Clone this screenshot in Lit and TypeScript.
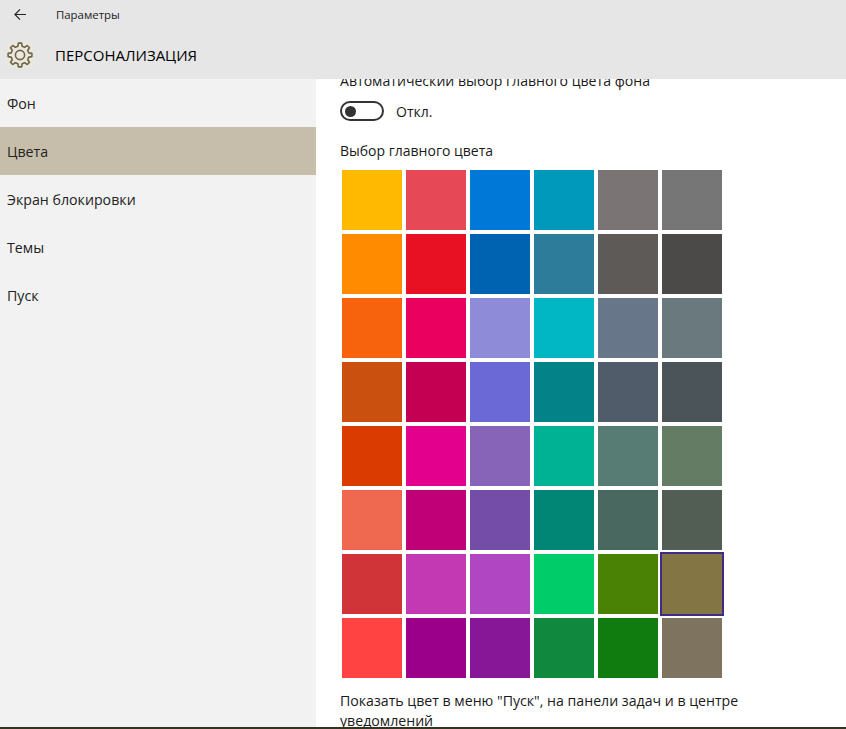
import { LitElement, html, css, svg } from "lit";
import { customElement } from "lit/decorators.js";

const COLORS = [
  ["#ffb900", "#e74856", "#0078d7", "#0099bc", "#7a7574", "#767676"],
  ["#ff8c00", "#e81123", "#0063b1", "#2d7d9a", "#5d5a58", "#4c4a48"],
  ["#f7630c", "#ea005e", "#8e8cd8", "#00b7c3", "#68768a", "#69797e"],
  ["#ca5010", "#c30052", "#6b69d6", "#038387", "#515c6b", "#4a5459"],
  ["#da3b01", "#e3008c", "#8764b8", "#00b294", "#567c73", "#647c64"],
  ["#ef6950", "#bf0077", "#744da9", "#018574", "#486860", "#525e54"],
  ["#d13438", "#c239b3", "#b146c2", "#00cc6a", "#498205", "#847545"],
  ["#ff4343", "#9a0089", "#881798", "#10893e", "#107c10", "#7e735f"],
];

const NAV = ["Фон", "Цвета", "Экран блокировки", "Темы", "Пуск"];

function gearPath(cx: number, cy: number, teeth: number, rOut: number, rIn: number) {
  const pts: string[] = [];
  const step = (Math.PI * 2) / teeth;
  for (let i = 0; i < teeth; i++) {
    const a = i * step - Math.PI / 2;
    const seq: [number, number][] = [
      [a - step * 0.3, rIn],
      [a - step * 0.17, rOut],
      [a + step * 0.17, rOut],
      [a + step * 0.3, rIn],
    ];
    for (const [ang, r] of seq) {
      pts.push(`${(cx + r * Math.cos(ang)).toFixed(2)} ${(cy + r * Math.sin(ang)).toFixed(2)}`);
    }
  }
  return "M" + pts.join("L") + "Z";
}

@customElement("app-root")
export class AppRoot extends LitElement {
  static styles = css`
    :host {
      display: block;
      width: 846px;
      height: 729px;
      font-family: "Open Sans", "Noto Sans", sans-serif;
      color: #1a1a1a;
      background: #fff;
      position: relative;
      overflow: hidden;
    }
    .header {
      height: 79px;
      background: #e6e6e6;
      display: flex;
      flex-direction: column;
      position: relative;
      z-index: 1;
    }
    .topbar {
      box-sizing: border-box;
      height: 31px;
      display: flex;
      align-items: center;
      padding-left: 14px;
      padding-bottom: 2px;
    }
    .back {
      width: 12px;
      height: 11px;
      display: block;
    }
    .app-title {
      margin-left: 30px;
      font-size: 11.4px;
      color: #222;
    }
    .titlebar {
      height: 48px;
      display: flex;
      align-items: center;
      padding-left: 7px;
    }
    .gear {
      width: 26px;
      height: 26px;
      display: block;
      background: #ebe8e0;
    }
    .page-title {
      margin-left: 22px;
      font-size: 15px;
      color: #000;
    }
    .main {
      display: flex;
      height: 650px;
    }
    .nav {
      width: 316px;
      background: #f2f2f2;
      flex: none;
    }
    .nav-item {
      height: 48px;
      padding-left: 7px;
      display: flex;
      align-items: center;
      font-size: 14.2px;
      color: #222;
    }
    .nav-item.selected {
      background: #c6beaa;
    }
    .content {
      flex: 1;
      padding-left: 24px;
      overflow: hidden;
    }
    .auto-label {
      margin-top: -8px;
      font-size: 14.1px;
      line-height: 20px;
    }
    .toggle-row {
      display: flex;
      align-items: center;
      margin-top: 10px;
      height: 20px;
    }
    .toggle {
      box-sizing: border-box;
      width: 44px;
      height: 20px;
      border: 2px solid #333;
      border-radius: 10px;
      display: flex;
      align-items: center;
      padding-left: 3px;
    }
    .knob {
      width: 11px;
      height: 11px;
      border-radius: 50%;
      background: #333;
    }
    .toggle-text {
      margin-left: 12px;
      font-size: 14px;
    }
    .pick-label {
      margin-top: 20px;
      font-size: 14px;
      line-height: 20px;
    }
    .grid {
      display: grid;
      grid-template-columns: repeat(6, 64px);
      grid-auto-rows: 64px;
      margin-top: 7px;
      width: 384px;
    }
    .cell {
      box-sizing: border-box;
      padding: 2px;
    }
    .cell.selected {
      border: 2px solid #3f2a86;
      padding: 0;
    }
    .swatch {
      width: 100%;
      height: 100%;
    }
    .show-label {
      margin-top: 11px;
      width: 420px;
      font-size: 14.15px;
      line-height: 20px;
    }
    .edge {
      position: absolute;
      left: 0;
      right: 0;
      bottom: 0;
      height: 2px;
      background: #33331f;
    }
  `;

  render() {
    return html`
      <div class="header">
        <div class="topbar">
          <svg class="back" viewBox="0 0 12 11" fill="none" stroke="#222" stroke-width="1.1">
            <path d="M12 5.5H1M6 .4 .9 5.5 6 10.6"></path>
          </svg>
          <span class="app-title">Параметры</span>
        </div>
        <div class="titlebar">
          <svg class="gear" viewBox="0 0 26 26" fill="none" stroke="#6f6547" stroke-width="1.6" stroke-linejoin="round">
            ${svg`<path d=${gearPath(13, 13, 8, 12, 9)}></path>`}
            <circle cx="13" cy="13" r="4.6"></circle>
          </svg>
          <span class="page-title">ПЕРСОНАЛИЗАЦИЯ</span>
        </div>
      </div>
      <div class="main">
        <nav class="nav">
          ${NAV.map(
            (n, i) => html`<div class="nav-item ${i === 1 ? "selected" : ""}">${n}</div>`
          )}
        </nav>
        <section class="content">
          <div class="auto-label">Автоматический выбор главного цвета фона</div>
          <div class="toggle-row">
            <div class="toggle"><div class="knob"></div></div>
            <span class="toggle-text">Откл.</span>
          </div>
          <div class="pick-label">Выбор главного цвета</div>
          <div class="grid">
            ${COLORS.flatMap((row, r) =>
              row.map(
                (c, k) => html`<div class="cell ${r === 6 && k === 5 ? "selected" : ""}">
                  <div class="swatch" style="background:${c}"></div>
                </div>`
              )
            )}
          </div>
          <div class="show-label">Показать цвет в меню "Пуск", на панели задач и в центре уведомлений</div>
        </section>
      </div>
      <div class="edge"></div>
    `;
  }
}
